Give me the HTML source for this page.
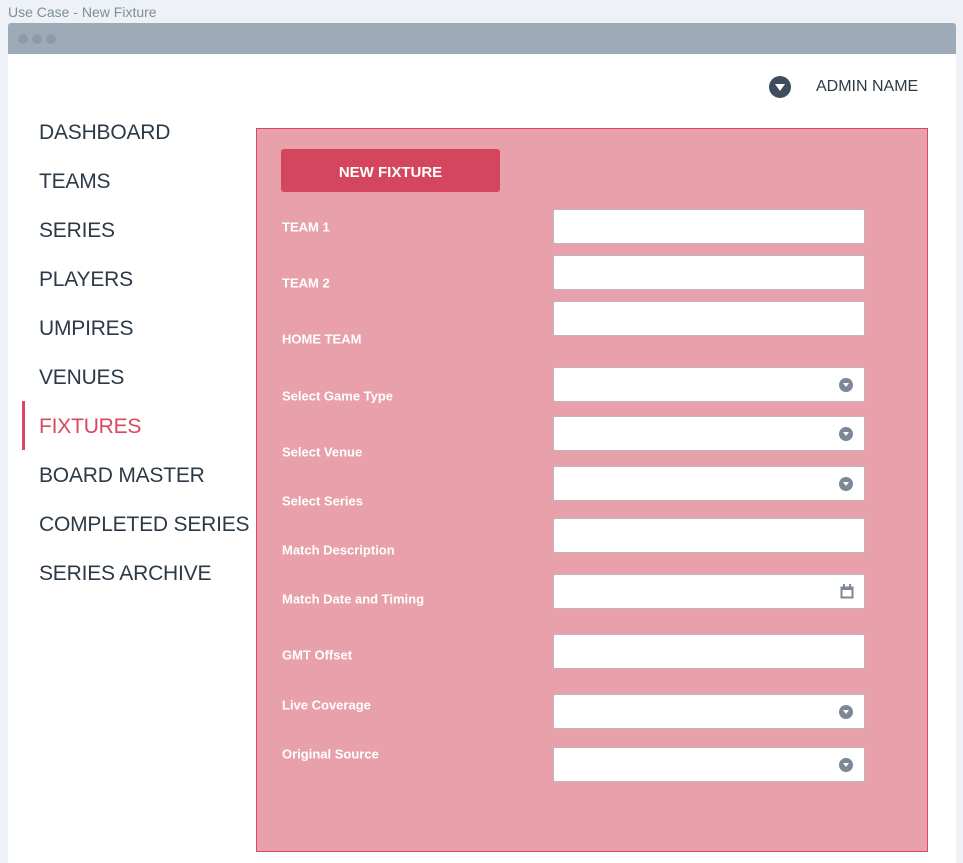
<!DOCTYPE html>
<html><head><style>
body{margin:0;width:963px;height:863px;background:#eef2f6;font-family:"Liberation Sans",sans-serif;position:relative;overflow:hidden}
.t{position:absolute;left:8px;top:4px;font-size:14px;color:#7f8c99}
.bar{position:absolute;left:8px;top:23px;width:948px;height:31px;background:#9dabb8;border-radius:3px 3px 0 0}
.dot{position:absolute;top:11px;width:10px;height:10px;border-radius:50%;background:#8d9aa7}
.win{position:absolute;left:8px;top:54px;width:948px;height:809px;background:#fff}
.nav{position:absolute;left:39px;font-size:21px;color:#2c3a48;letter-spacing:-0.2px}
.panel{position:absolute;left:256px;top:128px;width:670px;height:722px;background:#e8a1ab;border:1.5px solid #d9485f}
.btn{position:absolute;left:281px;top:149px;width:219px;height:43px;background:#d4465d;border-radius:3px;color:#fff;font-size:15px;font-weight:bold;text-align:center;line-height:47px}
.lbl{position:absolute;left:282px;font-size:13px;font-weight:bold;color:#fff;transform:translateY(-50%);margin-top:1px}
.in{position:absolute;left:553px;width:310px;height:33px;background:#fff;border:1px solid #c3b3bc;border-radius:2px}
.dd{position:absolute;right:11px;top:10px;width:14px;height:14px;border-radius:50%;background:#7d8896}
.dd:after{content:"";position:absolute;left:4px;top:5px;border-left:3px solid transparent;border-right:3px solid transparent;border-top:4px solid #fff}
</style></head><body>
<div class="t">Use Case - New Fixture</div>
<div class="bar"><div class="dot" style="left:10px"></div><div class="dot" style="left:24px"></div><div class="dot" style="left:38px"></div></div>
<div class="win"></div>
<div style="position:absolute;left:769px;top:76px;width:22px;height:22px;border-radius:50%;background:#3f4d5c"></div>
<div style="position:absolute;left:775px;top:84px;border-left:5px solid transparent;border-right:5px solid transparent;border-top:7px solid #fff"></div>
<div style="position:absolute;left:816px;top:78px;font-size:16px;color:#2c3a48">ADMIN NAME</div>
<div class="nav" style="top:121px">DASHBOARD</div>
<div class="nav" style="top:170px">TEAMS</div>
<div class="nav" style="top:219px">SERIES</div>
<div class="nav" style="top:268px">PLAYERS</div>
<div class="nav" style="top:317px">UMPIRES</div>
<div class="nav" style="top:366px">VENUES</div>
<div style="position:absolute;left:22px;top:401px;width:3px;height:49px;background:#d9485f"></div>
<div class="nav" style="top:415px;color:#d9485f">FIXTURES</div>
<div class="nav" style="top:464px">BOARD MASTER</div>
<div class="nav" style="top:513px">COMPLETED SERIES</div>
<div class="nav" style="top:562px">SERIES ARCHIVE</div>
<div class="panel"></div>
<div class="btn">NEW FIXTURE</div>
<div class="lbl" style="top:226px">TEAM 1</div>
<div class="lbl" style="top:282px">TEAM 2</div>
<div class="lbl" style="top:338px">HOME TEAM</div>
<div class="lbl" style="top:395px">Select Game Type</div>
<div class="lbl" style="top:451px">Select Venue</div>
<div class="lbl" style="top:500px">Select Series</div>
<div class="lbl" style="top:549px">Match Description</div>
<div class="lbl" style="top:598px">Match Date and Timing</div>
<div class="lbl" style="top:654px">GMT Offset</div>
<div class="lbl" style="top:704px">Live Coverage</div>
<div class="lbl" style="top:753px">Original Source</div>
<div class="in" style="top:209px"></div>
<div class="in" style="top:255px"></div>
<div class="in" style="top:301px"></div>
<div class="in" style="top:367px"><div class="dd"></div></div>
<div class="in" style="top:416px"><div class="dd"></div></div>
<div class="in" style="top:466px"><div class="dd"></div></div>
<div class="in" style="top:518px"></div>
<div class="in" style="top:574px"><svg style="position:absolute;right:10px;top:9px" width="14" height="15" viewBox="0 0 14 15"><rect x="1.5" y="3.5" width="11" height="10" fill="none" stroke="#7d8896" stroke-width="2"/><rect x="1" y="3" width="12" height="3" fill="#7d8896"/><rect x="3" y="0" width="2" height="4" fill="#7d8896"/><rect x="9" y="0" width="2" height="4" fill="#7d8896"/></svg></div>
<div class="in" style="top:634px"></div>
<div class="in" style="top:694px"><div class="dd"></div></div>
<div class="in" style="top:747px"><div class="dd"></div></div>
</body></html>
